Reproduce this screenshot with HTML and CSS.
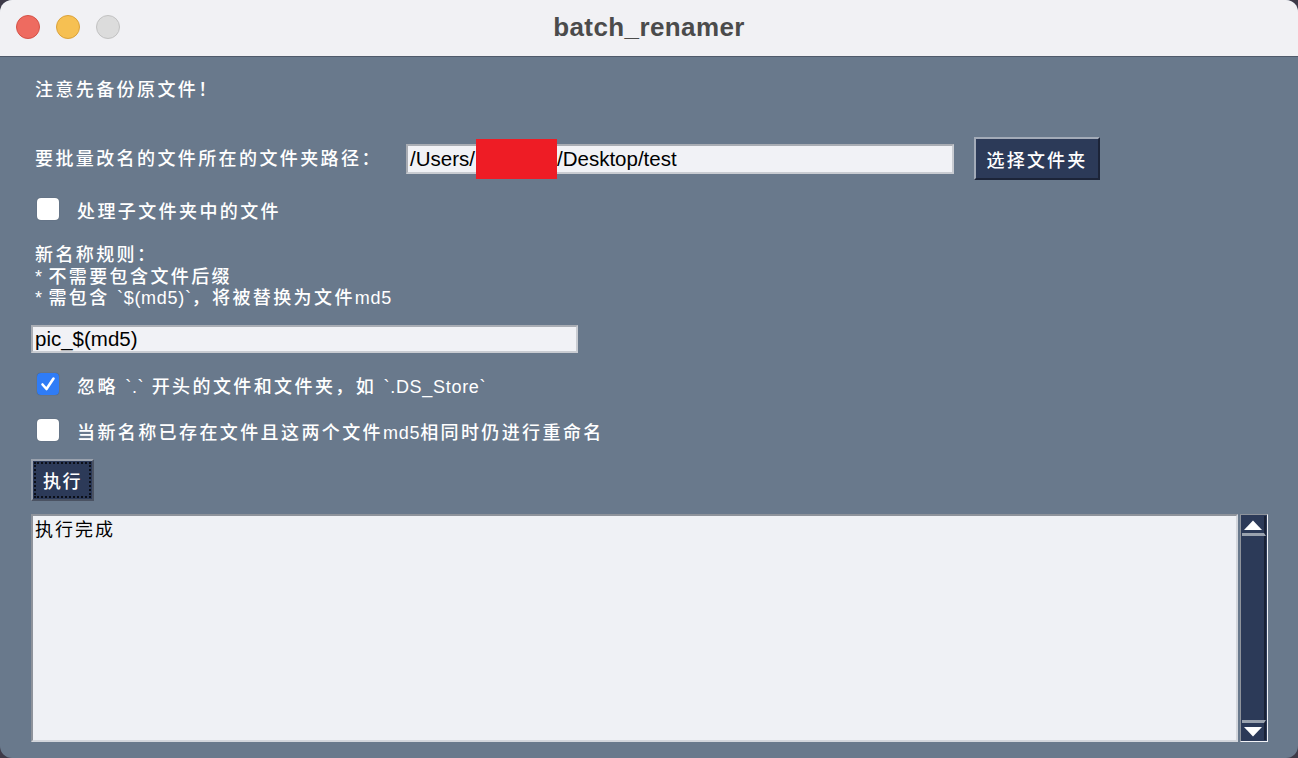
FILE: index.html
```html
<!DOCTYPE html>
<html lang="zh">
<head>
<meta charset="utf-8">
<title>batch_renamer</title>
<link rel="stylesheet" href="styles.css">
</head>
<body>
<div class="window">
  <div class="titlebar">
    <div class="lights">
      <span class="light red"></span>
      <span class="light yellow"></span>
      <span class="light gray"></span>
    </div>
    <div class="title">batch_renamer</div>
  </div>
  <div class="content">
    <div class="text notice">注意先备份原文件！</div>
    <div class="path-row">
      <div class="text path-label">要批量改名的文件所在的文件夹路径：</div>
      <div class="input path-input"><span class="seg">/Users/</span><span class="gap"></span>/Desktop/test<span class="redact"></span></div>
      <div class="btn choose">选择文件夹</div>
    </div>
    <div class="check-row first">
      <span class="box"></span>
      <span class="text">处理子文件夹中的文件</span>
    </div>
    <div class="text rules">新名称规则：<br><span class="lt">* </span>不需要包含文件后缀<br><span class="lt">* </span>需包含 <span class="lt">`$(md5)`</span>，将被替换为文件<span class="lt">md5</span></div>
    <div class="input name-input">pic_$(md5)</div>
    <div class="check-row second">
      <span class="box checked"><svg viewBox="0 0 22 22" width="22" height="22"><path d="M5.5 11.5 L9.5 16 L16.5 5.5" fill="none" stroke="#fff" stroke-width="2.6" stroke-linecap="round" stroke-linejoin="round"/></svg></span>
      <span class="text">忽略 <span class="lt">`.`</span> 开头的文件和文件夹，如 <span class="lt">`.DS_Store`</span></span>
    </div>
    <div class="check-row third">
      <span class="box"></span>
      <span class="text">当新名称已存在文件且这两个文件<span class="lt">md5</span>相同时仍进行重命名</span>
    </div>
    <div class="run-wrap"><div class="btn run"><span class="run-inner">执行</span></div></div>
    <div class="log">
      <div class="log-text">执行完成</div>
      <div class="scrollbar">
        <div class="arrow up"><svg viewBox="0 0 20 12" width="20" height="12"><path d="M1 11 L10 1.5 L19 11 Z" fill="#fff"/></svg></div>
        <div class="track"></div>
        <div class="arrow down"><svg viewBox="0 0 20 12" width="20" height="12"><path d="M1 1 L10 10.5 L19 1 Z" fill="#fff"/></svg></div>
      </div>
    </div>
  </div>
</div>
</body>
</html>
```
FILE: styles.css
```css
* { box-sizing: border-box; }
html, body { margin: 0; padding: 0; }
body {
  width: 1298px;
  height: 758px;
  background: #3e3a48;
  overflow: hidden;
  font-family: "Liberation Sans", "Noto Sans CJK SC", sans-serif;
}
.window {
  width: 1298px;
  height: 758px;
  border-radius: 12px;
  overflow: hidden;
  display: flex;
  flex-direction: column;
  background: #69798c;
}
.titlebar {
  height: 57px;
  flex: none;
  background: #f1f1f4;
  border-bottom: 1px solid #4f5a6a;
  position: relative;
  display: flex;
  align-items: center;
  justify-content: center;
}
.lights {
  position: absolute;
  left: 16px;
  top: 15px;
  display: flex;
  gap: 16px;
}
.light {
  width: 24px;
  height: 24px;
  border-radius: 50%;
  display: block;
}
.light.red { background: #ee6b60; border: 1px solid #d55247; }
.light.yellow { background: #f6c052; border: 1px solid #dba23a; }
.light.gray { background: #dcdcdc; border: 1px solid #c2c2c2; }
.title {
  font-family: "Liberation Sans", "Noto Sans", sans-serif;
  font-weight: bold;
  font-size: 26px;
  letter-spacing: 0.4px;
  color: #4b4b4b;
  margin-top: -2px;
}
.content {
  flex: 1;
  display: flex;
  flex-direction: column;
  padding: 0 30px 16px 31px;
}
.text {
  color: #ffffff;
  font-size: 18px;
  font-weight: 500;
  letter-spacing: 2.4px;
  line-height: 22px;
}
.lt {
  letter-spacing: 0.7px;
}
.notice {
  margin-top: 22px;
  margin-left: 4px;
  height: 22px;
}
.path-row {
  margin-top: 36px;
  height: 43px;
  display: flex;
  align-items: center;
}
.path-label {
  width: 371px;
  margin-left: 4px;
  flex: none;
  white-space: nowrap;
  padding-top: 1px;
}
.input {
  background: #f1f2f6;
  border: 2px solid #c9ccd2;
  border-top-color: #a9adb4;
  border-left-color: #a9adb4;
  font-family: "Liberation Sans", sans-serif;
  font-size: 20.5px;
  color: #000;
  display: flex;
  align-items: center;
  padding-left: 2px;
  white-space: pre;
}
.path-input {
  width: 548px;
  height: 30px;
  position: relative;
  flex: none;
}
.seg { display: inline-block; width: 66px; }
.gap { display: inline-block; width: 81px; }
.redact {
  position: absolute;
  left: 68px;
  top: -7px;
  width: 81px;
  height: 40px;
  background: #ee1c25;
}
.btn {
  background: #2c3a58;
  color: #fff;
  font-size: 18px;
  font-weight: 500;
  letter-spacing: 2.2px;
  display: flex;
  align-items: center;
  justify-content: center;
}
.choose {
  margin-left: 20px;
  width: 126px;
  height: 43px;
  border: 2px solid #1c2438;
  border-top-color: #a3abb8;
  border-left-color: #a3abb8;
}
.check-row {
  display: flex;
  align-items: center;
  height: 22px;
  margin-left: 6px;
}
.check-row .text { padding-top: 5px; }
.check-row.first { margin-top: 18px; }
.check-row.second { margin-top: 20px; }
.check-row.third { margin-top: 24px; }
.box {
  width: 22px;
  height: 22px;
  border-radius: 4px;
  background: #ffffff;
  box-shadow: 0 0 1px rgba(0,0,0,0.35);
  margin-right: 18px;
  flex: none;
  display: flex;
}
.box.checked { background: #2f7cf6; }
.rules {
  margin-top: 25px;
  margin-left: 4px;
  line-height: 21.5px;
  height: 64px;
}
.name-input {
  margin-top: 16px;
  width: 547px;
  height: 28px;
  padding-left: 2px;
}
.run-wrap {
  margin-top: 18px;
  display: flex;
}
.btn.run {
  width: 63px;
  height: 42px;
  border: 2px solid #9aa2ae;
  border-right-color: #4a5262;
  border-bottom-color: #4a5262;
  padding: 1px;
}
.run-inner {
  width: 100%;
  height: 100%;
  border: 2px dotted #0b0f18;
  display: flex;
  align-items: center;
  justify-content: center;
  letter-spacing: 1.5px;
}
.log {
  margin-top: 13px;
  flex: 1;
  display: flex;
}
.log-text {
  width: 1207px;
  background: #eff1f5;
  border: 2px solid #d3d6dc;
  border-top-color: #8e939b;
  border-left-color: #8e939b;
  font-size: 18px;
  line-height: 24px;
  color: #000;
  padding: 2px 2px;
  letter-spacing: 2px;
}
.scrollbar {
  margin-left: 2px;
  width: 28px;
  display: flex;
  flex-direction: column;
  background: #2c3a58;
  border: 1px solid #f1f2f6;
  border-left-color: #8e939b;
  border-top-color: #8e939b;
  padding: 1px;
}
.arrow {
  height: 20px;
  background: #2c3a58;
  display: flex;
  align-items: center;
  justify-content: center;
  border-right: 2px solid #1a2236;
}
.arrow.up { border-bottom: 3px solid #9aa2ae; }
.arrow.down { border-top: 3px solid #9aa2ae; }
.track {
  flex: 1;
  border-right: 2px solid #1a2236;
}
```
